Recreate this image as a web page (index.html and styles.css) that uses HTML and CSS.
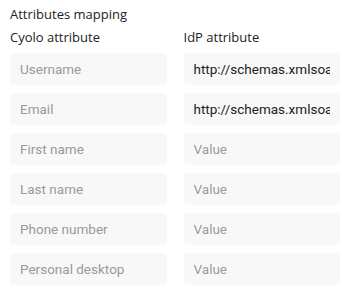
FILE: index.html
```html
<!DOCTYPE html>
<html lang="en">
<head>
    <meta charset="UTF-8">
    <meta name="viewport" content="width=device-width, initial-scale=1.0">
    <title>Attributes mapping</title>
    <link rel="stylesheet" href="styles.css">
</head>
<body>
    <div class="mapping">
        <div class="mapping-title">Attributes mapping</div>
        <div class="mapping-grid">
            <div class="column-label">Cyolo attribute</div>
            <div class="column-label">IdP attribute</div>

            <input class="field" type="text" placeholder="Username" readonly>
            <input class="field" type="text" value="http://schemas.xmlsoap.org/ws/2005/05/identity/claims/name">

            <input class="field" type="text" placeholder="Email" readonly>
            <input class="field" type="text" value="http://schemas.xmlsoap.org/ws/2005/05/identity/claims/emailaddress">

            <input class="field" type="text" placeholder="First name" readonly>
            <input class="field" type="text" placeholder="Value">

            <input class="field" type="text" placeholder="Last name" readonly>
            <input class="field" type="text" placeholder="Value">

            <input class="field" type="text" placeholder="Phone number" readonly>
            <input class="field" type="text" placeholder="Value">

            <input class="field" type="text" placeholder="Personal desktop" readonly>
            <input class="field" type="text" placeholder="Value">
        </div>
    </div>
</body>
</html>
```

FILE: styles.css
```css
/* Page reset */
html, body {
    margin: 0;
    padding: 0;
    background-color: #ffffff;
}

/* Outer wrapper */
.mapping {
    padding: 4px 6px 0 10px;
    font-family: "Open Sans", "Liberation Sans", sans-serif;
    color: #222222;
}

/* Section title */
.mapping-title {
    font-size: 13px;
    line-height: 20px;
    margin-bottom: 3px;
}

/* Two columns: Cyolo attribute / IdP attribute */
.mapping-grid {
    display: grid;
    grid-template-columns: 1fr 1fr;
    column-gap: 17px;
    row-gap: 8px;
}

.column-label {
    font-size: 13px;
    line-height: 20px;
    margin-bottom: -2px;
}

/* Text fields */
.field {
    box-sizing: border-box;
    width: 100%;
    height: 32px;
    padding: 0 10px;
    border: none;
    border-radius: 4px;
    background-color: #f8f8f8;
    font-family: Roboto, "Liberation Sans", sans-serif;
    font-size: 13.5px;
    color: #222222;
    outline: none;
}

.field::placeholder {
    color: #9a9a9a;
}
```
